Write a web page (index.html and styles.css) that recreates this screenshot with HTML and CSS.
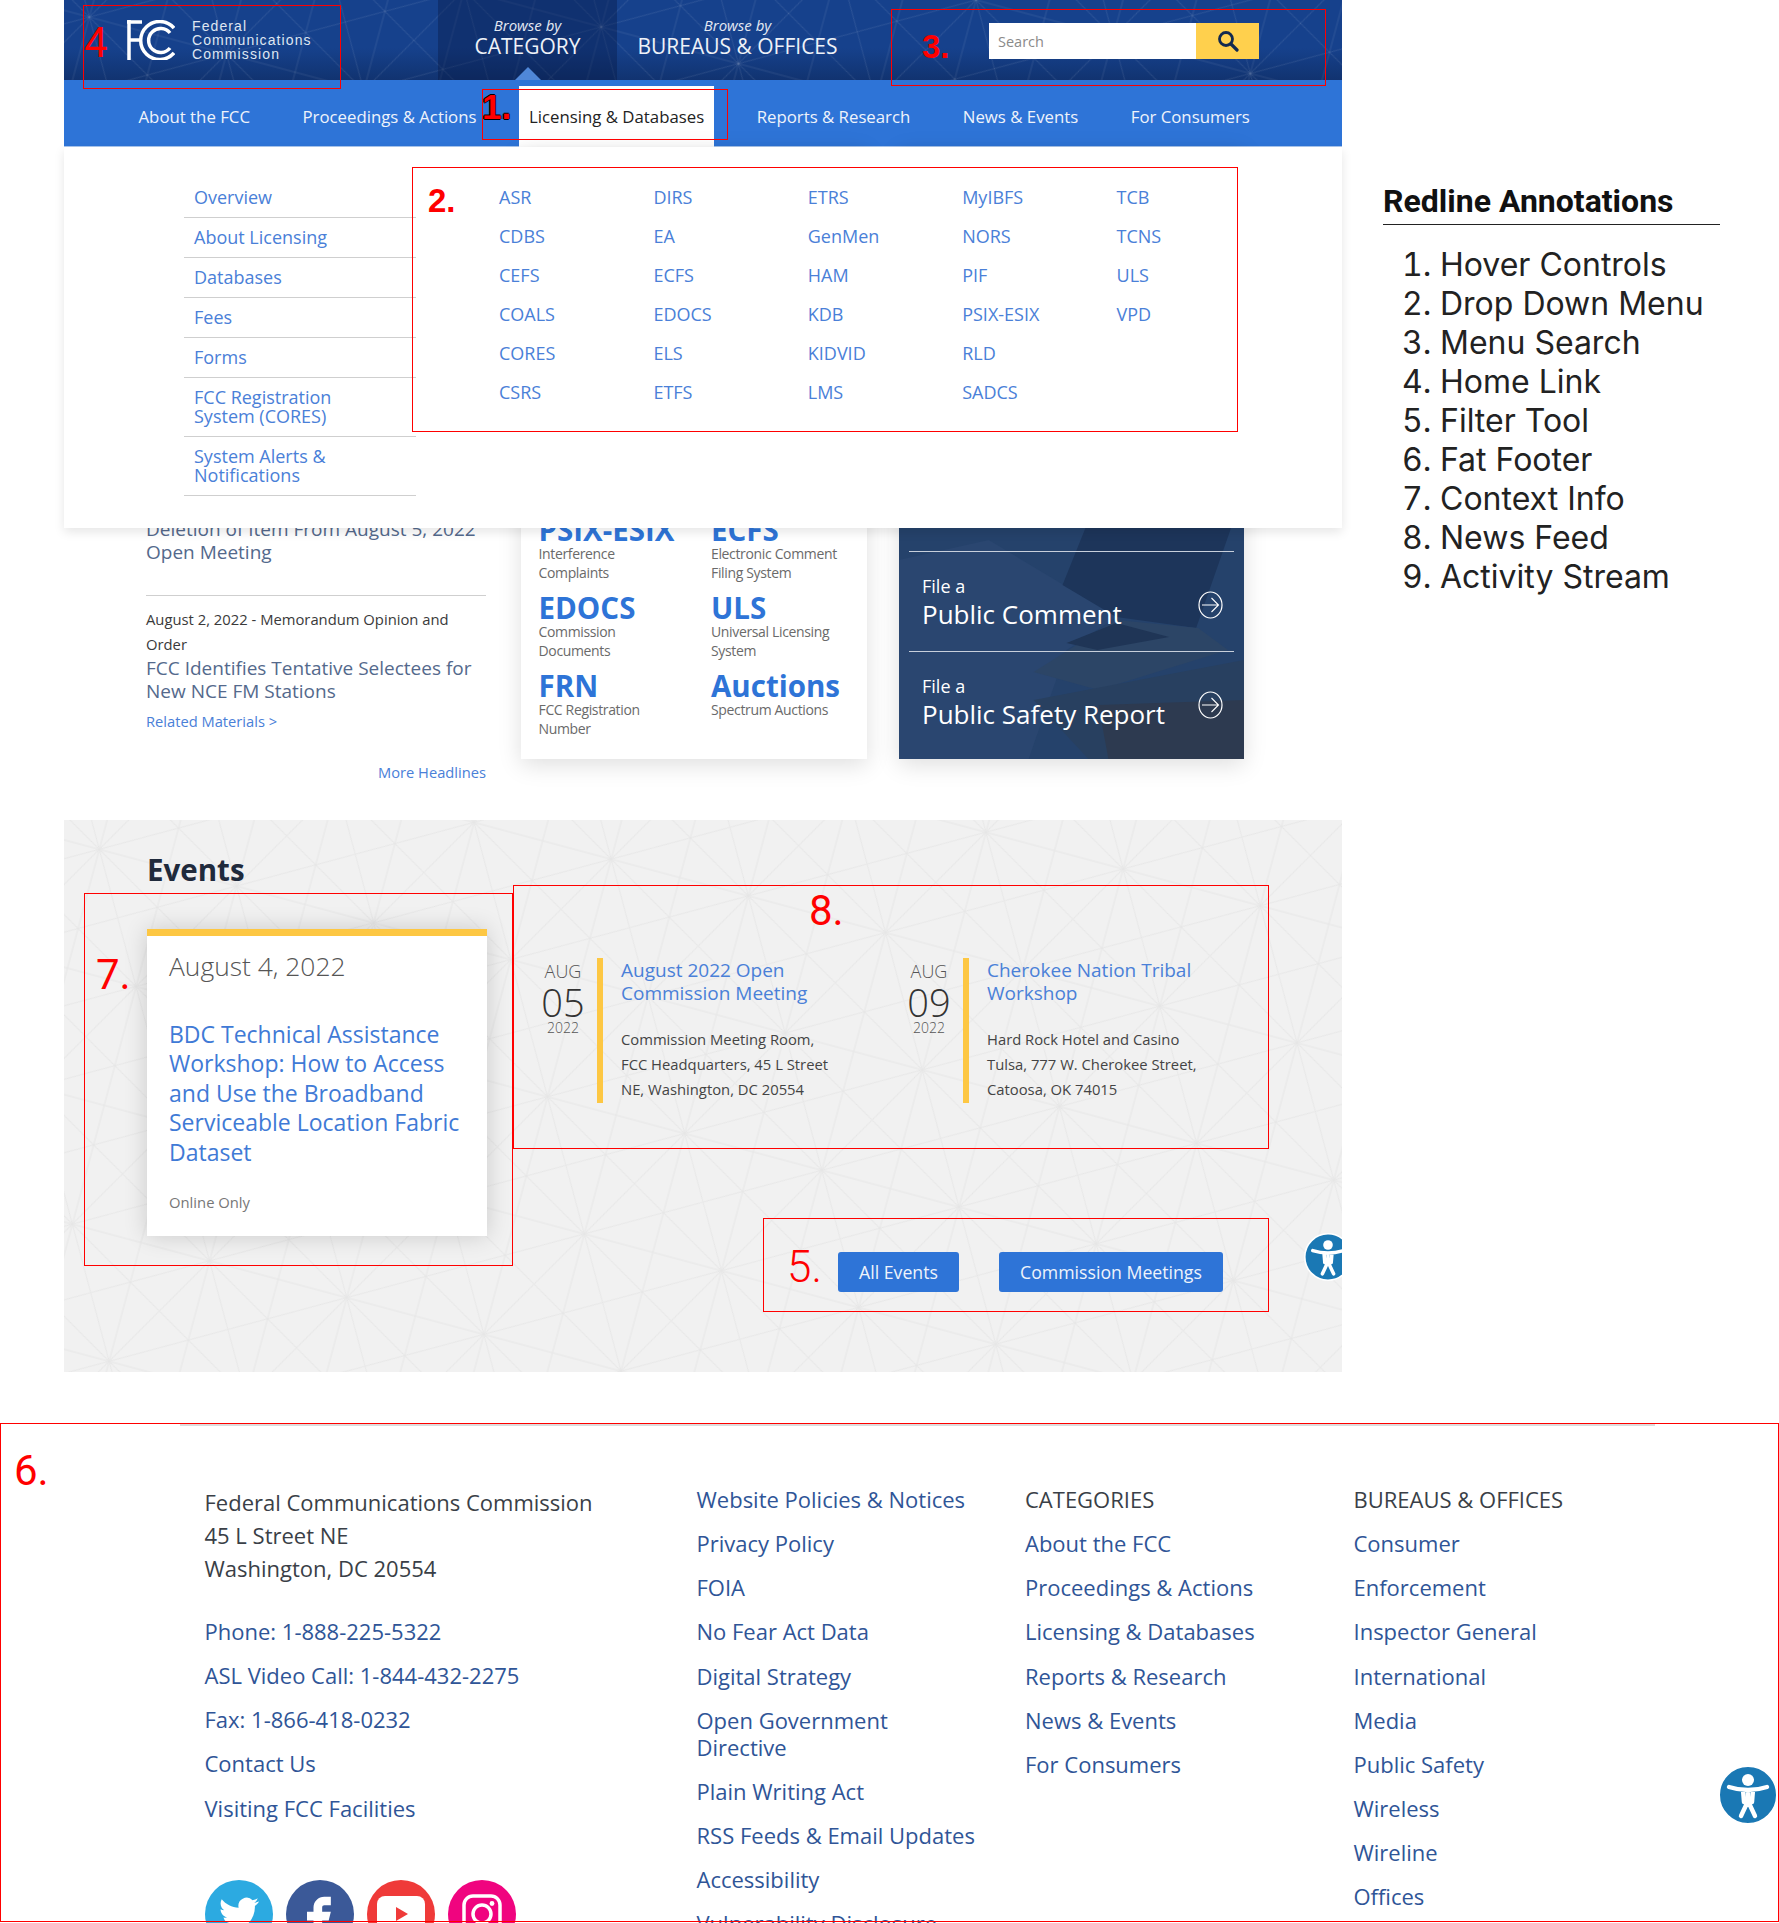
FILE: index.html
```html
<!DOCTYPE html>
<html lang="en">

<head>
  <meta charset="UTF-8">
  <title>FCC Redline Annotations</title>
  <link rel="stylesheet" href="styles.css">
</head>

<body>
  <svg class="sprites" width="0" height="0">
    <symbol id="access" viewBox="0 0 60 60">
      <circle cx="30" cy="30" r="29" fill="#1a78b4" stroke="#fff" stroke-width="2"/>
      <circle cx="30" cy="15" r="6" fill="#fff"/>
      <path d="M11 22c6 2 12 3 19 3s13-1 19-3M30 25v12M30 36l-7 15M30 36l7 15M25 25l1 12M35 25l-1 12" fill="none" stroke="#fff" stroke-width="4.4" stroke-linecap="round"/>
    </symbol>
    <symbol id="circle-arrow" viewBox="0 0 25 28">
      <ellipse cx="12.5" cy="14" rx="11.5" ry="13" fill="none" stroke="#fff" stroke-width="1.2"/>
      <path d="M4 14h16M13.5 7l7 7-7 7" fill="none" stroke="#fff" stroke-width="1.1"/>
    </symbol>
  </svg>

  <div class="page">
    <div class="top">
      <div class="site">
        <header class="masthead">
          <a class="logo">
            <svg class="logo-mark" viewBox="0 0 48 40" width="48" height="40">
              <path d="M2 0v40M0 2h15M2 20h11" fill="none" stroke="#fff" stroke-width="3.5"/>
              <path d="M47 8A19 19 0 1 0 47 33M43 13A12 12 0 1 0 43 28" fill="none" stroke="#fff" stroke-width="3.5"/>
            </svg>
            <span class="logo-text">Federal<br>Communications<br>Commission</span>
          </a>
          <a class="tab tab-category is-open"><em>Browse by</em><span>CATEGORY</span></a>
          <a class="tab tab-bureaus"><em>Browse by</em><span>BUREAUS &amp; OFFICES</span></a>
          <form class="search">
            <span class="search-input">Search</span>
            <span class="search-btn">
              <svg viewBox="0 0 22 22" width="22" height="22">
                <circle cx="9" cy="9" r="6.5" fill="none" stroke="#12294f" stroke-width="2.8"/>
                <path d="M14 14l6 6" stroke="#12294f" stroke-width="3.2" stroke-linecap="round"/>
              </svg>
            </span>
          </form>
        </header>

        <nav class="mainnav">
          <a>About the FCC</a>
          <a>Proceedings &amp; Actions</a>
          <a class="active">Licensing &amp; Databases</a>
          <a>Reports &amp; Research</a>
          <a>News &amp; Events</a>
          <a>For Consumers</a>
        </nav>

        <section class="content">
          <div class="headlines">
            <div class="headline first">
              <a class="headline-title">Deletion of Item From August 5, 2022<br>Open Meeting</a>
            </div>
            <div class="headline">
              <p class="headline-date">August 2, 2022 - Memorandum Opinion and<br>Order</p>
              <a class="headline-title">FCC Identifies Tentative Selectees for New NCE FM Stations</a>
              <a class="related">Related Materials &gt;</a>
            </div>
            <a class="more">More Headlines</a>
          </div>

          <div class="systems">
            <div class="system"><h3>PSIX-ESIX</h3><p>Interference<br>Complaints</p></div>
            <div class="system"><h3>ECFS</h3><p>Electronic Comment<br>Filing System</p></div>
            <div class="system"><h3>EDOCS</h3><p>Commission<br>Documents</p></div>
            <div class="system"><h3>ULS</h3><p>Universal Licensing<br>System</p></div>
            <div class="system"><h3>FRN</h3><p>FCC Registration<br>Number</p></div>
            <div class="system"><h3>Auctions</h3><p>Spectrum Auctions</p></div>
          </div>

          <div class="file-card">
            <svg class="file-photo" viewBox="0 0 346 259" preserveAspectRatio="none">
              <path d="M0 60L90 40 165 85 218 117 168 150 130 259H0z" fill="#2a4670"/>
              <path d="M187 28H333L298 128 218 117 164 85z" fill="#1d355a"/>
              <path d="M135 172L218 120 300 128 330 150 200 190z" fill="#2c4566"/>
              <path d="M168 143L218 123 271 137 199 150z" fill="#1f3556"/>
              <path d="M135 200L346 160V259H190z" fill="#284060"/>
              <path d="M200 205L346 200V259H210z" fill="#2d3a50"/>
            </svg>
            <a class="file-row">
              <span class="file-text"><small>File a</small>Public Comment</span>
              <svg class="file-arrow"><use href="#circle-arrow"/></svg>
            </a>
            <a class="file-row">
              <span class="file-text"><small>File a</small>Public Safety Report</span>
              <svg class="file-arrow"><use href="#circle-arrow"/></svg>
            </a>
          </div>

          <div class="dropdown">
            <ul class="side-links">
              <li><a>Overview</a></li>
              <li><a>About Licensing</a></li>
              <li><a>Databases</a></li>
              <li><a>Fees</a></li>
              <li><a>Forms</a></li>
              <li class="tall"><a>FCC Registration<br>System (CORES)</a></li>
              <li class="tall"><a>System Alerts &amp;<br>Notifications</a></li>
            </ul>
            <ul class="db-links">
              <li>ASR</li><li>CDBS</li><li>CEFS</li><li>COALS</li><li>CORES</li><li>CSRS</li>
              <li>DIRS</li><li>EA</li><li>ECFS</li><li>EDOCS</li><li>ELS</li><li>ETFS</li>
              <li>ETRS</li><li>GenMen</li><li>HAM</li><li>KDB</li><li>KIDVID</li><li>LMS</li>
              <li>MyIBFS</li><li>NORS</li><li>PIF</li><li>PSIX-ESIX</li><li>RLD</li><li>SADCS</li>
              <li>TCB</li><li>TCNS</li><li>ULS</li><li>VPD</li>
            </ul>
          </div>
        </section>

        <section class="events">
          <h2>Events</h2>
          <div class="events-body">
            <article class="feature">
              <p class="feature-date">August 4, 2022</p>
              <a class="feature-title">BDC Technical Assistance Workshop: How to Access and Use the Broadband Serviceable Location Fabric Dataset</a>
              <p class="feature-place">Online Only</p>
            </article>
            <div class="events-side">
              <div class="event-list">
                <div class="event">
                  <div class="event-date"><span class="mon">AUG</span><span class="day">05</span><span class="year">2022</span></div>
                  <div class="event-info">
                    <a>August 2022 Open<br>Commission Meeting</a>
                    <p>Commission Meeting Room,<br>FCC Headquarters, 45 L Street<br>NE, Washington, DC 20554</p>
                  </div>
                </div>
                <div class="event">
                  <div class="event-date"><span class="mon">AUG</span><span class="day">09</span><span class="year">2022</span></div>
                  <div class="event-info">
                    <a>Cherokee Nation Tribal<br>Workshop</a>
                    <p>Hard Rock Hotel and Casino<br>Tulsa, 777 W. Cherokee Street,<br>Catoosa, OK 74015</p>
                  </div>
                </div>
              </div>
              <div class="event-filters">
                <a class="btn btn-all">All Events</a>
                <a class="btn btn-meetings">Commission Meetings</a>
              </div>
            </div>
          </div>
          <svg class="access access-events"><use href="#access"/></svg>
        </section>
      </div>

      <aside class="notes">
        <h1>Redline Annotations</h1>
        <ol>
          <li>Hover Controls</li>
          <li>Drop Down Menu</li>
          <li>Menu Search</li>
          <li>Home Link</li>
          <li>Filter Tool</li>
          <li>Fat Footer</li>
          <li>Context Info</li>
          <li>News Feed</li>
          <li>Activity Stream</li>
        </ol>
      </aside>
    </div>

    <footer class="fatfooter">
      <div class="footer-grid">
        <div class="footer-contact">
          <p class="address">Federal Communications Commission<br>45 L Street NE<br>Washington, DC 20554</p>
          <ul class="footer-links">
            <li>Phone: 1-888-225-5322</li>
            <li>ASL Video Call: 1-844-432-2275</li>
            <li>Fax: 1-866-418-0232</li>
            <li>Contact Us</li>
            <li>Visiting FCC Facilities</li>
          </ul>
          <div class="social">
            <span class="social-icon twitter">
              <svg viewBox="0 0 24 24" width="40" height="40"><path fill="#fff" d="M23.95 4.57a10 10 0 0 1-2.82.77 4.96 4.96 0 0 0 2.16-2.72c-.95.55-2 .96-3.12 1.19a4.92 4.92 0 0 0-8.38 4.48C7.69 8.09 4.07 6.13 1.64 3.16a4.82 4.82 0 0 0-.67 2.48c0 1.71.87 3.21 2.19 4.1a4.9 4.9 0 0 1-2.23-.61v.06c0 2.38 1.69 4.37 3.95 4.83a5 5 0 0 1-2.21.08 4.94 4.94 0 0 0 4.6 3.42A9.87 9.87 0 0 1 0 19.54a13.94 13.94 0 0 0 7.55 2.21c9.06 0 14-7.5 14-13.98 0-.21 0-.42-.02-.63A9.94 9.94 0 0 0 24 4.59z"/></svg>
            </span>
            <span class="social-icon facebook">
              <svg viewBox="0 0 24 24" width="52" height="52"><path fill="#fff" d="M14 8h3V4h-3c-2.8 0-5 2.2-5 5v2H6v4h3v9h4v-9h3l1-4h-4V9c0-.6.4-1 1-1z"/></svg>
            </span>
            <span class="social-icon youtube">
              <svg viewBox="0 0 48 36" width="48" height="36"><rect width="48" height="36" rx="8" fill="#fff"/><path d="M19 11l12 7-12 7z" fill="#ef3a39"/></svg>
            </span>
            <span class="social-icon instagram">
              <svg viewBox="0 0 40 40" width="40" height="40"><rect x="2" y="2" width="36" height="36" rx="9" fill="none" stroke="#fff" stroke-width="3.5"/><circle cx="20" cy="20" r="9" fill="none" stroke="#fff" stroke-width="3.5"/><circle cx="30" cy="9.5" r="2.4" fill="#fff"/></svg>
            </span>
          </div>
        </div>

        <ul class="footer-links">
          <li>Website Policies &amp; Notices</li>
          <li>Privacy Policy</li>
          <li>FOIA</li>
          <li>No Fear Act Data</li>
          <li>Digital Strategy</li>
          <li>Open Government<br>Directive</li>
          <li>Plain Writing Act</li>
          <li>RSS Feeds &amp; Email Updates</li>
          <li>Accessibility</li>
          <li>Vulnerability Disclosure</li>
        </ul>

        <ul class="footer-links">
          <li class="footer-head">CATEGORIES</li>
          <li>About the FCC</li>
          <li>Proceedings &amp; Actions</li>
          <li>Licensing &amp; Databases</li>
          <li>Reports &amp; Research</li>
          <li>News &amp; Events</li>
          <li>For Consumers</li>
        </ul>

        <ul class="footer-links">
          <li class="footer-head">BUREAUS &amp; OFFICES</li>
          <li>Consumer</li>
          <li>Enforcement</li>
          <li>Inspector General</li>
          <li>International</li>
          <li>Media</li>
          <li>Public Safety</li>
          <li>Wireless</li>
          <li>Wireline</li>
          <li>Offices</li>
        </ul>
      </div>
      <svg class="access access-footer"><use href="#access"/></svg>
    </footer>

    <div class="redbox box-home"></div>
    <div class="redbox box-hover"></div>
    <div class="redbox box-search"></div>
    <div class="redbox box-menu"></div>
    <div class="redbox box-context"></div>
    <div class="redbox box-news"></div>
    <div class="redbox box-filter"></div>
    <div class="redbox box-footer"></div>

    <span class="mark mark-1">1.</span>
    <span class="mark mark-2">2.</span>
    <span class="mark mark-3">3.</span>
    <span class="mark mark-4">4</span>
    <span class="mark mark-5">5.</span>
    <span class="mark mark-6">6.</span>
    <span class="mark mark-7">7.</span>
    <span class="mark mark-8">8.</span>
  </div>
</body>

</html>
```

FILE: styles.css
```css
* {
  box-sizing: border-box;
}

body {
  margin: 0;
  font-family: "Open Sans", sans-serif;
  background: #fff;
}

ul,
ol,
p,
h1,
h2,
h3 {
  margin: 0;
  padding: 0;
}

ul {
  list-style: none;
}

.sprites {
  position: absolute;
}

.page {
  position: relative;
  height: 1923px;
  overflow: hidden;
}

.top {
  display: flex;
  padding-left: 64px;
}

.site {
  width: 1278px;
  flex: none;
}

/* header */
.masthead {
  display: flex;
  height: 80px;
  padding-left: 63px;
  color: #fff;
  background:
    url("data:image/svg+xml,%3Csvg xmlns='http://www.w3.org/2000/svg' width='1278' height='80'%3E%3Cdefs%3E%3Cpattern id='n' width='142' height='246' patternUnits='userSpaceOnUse' patternTransform='translate(912 0) rotate(15)'%3E%3Cpath d='M0 0H142M0 123H142M0 246H142M0 0L142 246M142 0L0 246M0 0V246M71 0V246M142 0V246M0 0L142 82M0 82L142 164M0 164L142 246M142 0L0 82M142 82L0 164M142 164L0 246' fill='none' stroke='white' stroke-opacity='.1'/%3E%3C/pattern%3E%3C/defs%3E%3Crect width='100%25' height='100%25' fill='url(%23n)'/%3E%3C/svg%3E"),
    linear-gradient(#16418c 60%, #113370);
}

.logo {
  flex: 0 0 311px;
  display: flex;
  align-items: center;
  gap: 17px;
}

.logo-text {
  font-family: "Liberation Sans", sans-serif;
  font-size: 14px;
  line-height: 14px;
  letter-spacing: 1.1px;
  color: #dfe6f2;
}

.tab {
  position: relative;
  display: flex;
  flex-direction: column;
  align-items: center;
  padding-top: 15px;
}

.tab em {
  font-size: 15px;
  line-height: 20px;
  color: #e4e9f3;
}

.tab span {
  margin-top: -2px;
  font-size: 21px;
  line-height: 26px;
  color: #eef2f8;
}

.tab-category {
  width: 179px;
}

.tab-bureaus {
  width: 241px;
}

.is-open {
  background: rgba(5, 20, 60, 0.35);
}

.is-open::after {
  content: "";
  position: absolute;
  bottom: 0;
  left: 77px;
  border-left: 13px solid transparent;
  border-right: 13px solid transparent;
  border-bottom: 13px solid #4f87d8;
}

.search {
  display: flex;
  height: 36px;
  margin: 23px 0 0 131px;
}

.search-input {
  width: 207px;
  padding-left: 9px;
  font-size: 14.5px;
  line-height: 37px;
  color: #8a8a8a;
  background: #fff;
}

.search-btn {
  display: flex;
  align-items: center;
  justify-content: center;
  width: 63px;
  background: #ffd04d;
}

/* nav */
.mainnav {
  display: flex;
  gap: 52.5px;
  height: 67px;
  padding: 6px 0 0 74.5px;
  background: #2e74d7;
  border-bottom: 1px solid #a9c6ee;
}

.mainnav a {
  font-size: 16.8px;
  line-height: 61px;
  height: 61px;
  color: #eef3fb;
  white-space: nowrap;
}

.mainnav .active {
  margin: 0 -10px;
  padding: 0 10px;
  color: #222;
  background: #fff;
}

/* content under the open menu */
.content {
  position: relative;
  display: flex;
  height: 673px;
  padding-left: 82px;
}

.headlines {
  width: 340px;
  flex: none;
  padding-top: 371px;
}

.headline-title {
  display: block;
  font-size: 19px;
  line-height: 23px;
  color: #54698c;
}

.headline.first {
  padding-bottom: 31px;
  border-bottom: 1px solid #cfcfcf;
}

.headline-date {
  padding-top: 11px;
  font-size: 14.8px;
  line-height: 25px;
  color: #3a3a3a;
}

.related {
  display: block;
  margin-top: 8px;
  font-size: 14.7px;
  line-height: 20px;
  color: #4a80d8;
}

.more {
  display: block;
  margin-top: 31px;
  font-size: 14.7px;
  line-height: 20px;
  text-align: right;
  color: #4a80d8;
}

.systems {
  display: grid;
  grid-template-columns: 172.5px 1fr;
  align-content: end;
  row-gap: 12px;
  flex: none;
  width: 346px;
  height: 612px;
  margin-left: 35px;
  padding: 0 0 21px 17.5px;
  background: #fff;
  box-shadow: 0 6px 22px rgba(0, 0, 0, 0.13);
}

.system h3 {
  margin-bottom: 1px;
  font-size: 29.5px;
  font-weight: 700;
  line-height: 28px;
  color: #2e74d7;
}

.system p {
  font-size: 14px;
  line-height: 18.5px;
  letter-spacing: -0.35px;
  color: #6a6a6a;
}

.file-card {
  position: relative;
  display: flex;
  flex-direction: column;
  justify-content: flex-end;
  flex: none;
  width: 345px;
  height: 612px;
  margin-left: 32px;
  padding: 0 10px 8px;
  color: #fff;
  background: #25426b;
  box-shadow: 0 6px 22px rgba(0, 0, 0, 0.13);
}

.file-photo {
  position: absolute;
  left: 0;
  bottom: 0;
  width: 100%;
  height: 259px;
}

.file-row {
  position: relative;
  display: flex;
  align-items: center;
  justify-content: space-between;
  height: 100px;
  padding: 6px 11px 0 13px;
  border-top: 1px solid #c7cfdb;
}

.file-text {
  margin-top: -6px;
  font-size: 26px;
  line-height: 32px;
}

.file-text small {
  display: block;
  font-size: 18px;
  line-height: 24px;
}

.file-arrow {
  width: 25px;
  height: 28px;
}

.dropdown {
  position: absolute;
  top: 0;
  left: 0;
  right: 0;
  height: 381px;
  display: flex;
  padding: 31px 0 0 120px;
  background: #fff;
  box-shadow: 0 4px 10px rgba(0, 0, 0, 0.1);
}

.side-links {
  width: 232px;
  flex: none;
}

.side-links li {
  height: 40px;
  padding: 9px 0 0 10px;
  border-bottom: 1px solid #cfcfcf;
  font-size: 18px;
  line-height: 20px;
  color: #4a80d8;
}

.side-links .tall {
  height: 59px;
  line-height: 18.5px;
  padding-top: 10px;
}

.db-links {
  display: grid;
  grid-template-rows: repeat(6, 39px);
  grid-auto-flow: column;
  grid-auto-columns: 154.4px;
  margin-left: 83px;
  font-size: 18px;
  line-height: 39px;
  height: 234px;
  color: #4a80d8;
}

/* events */
.events {
  position: relative;
  height: 552px;
  padding: 30px 0 0 83px;
  overflow: hidden;
  background:
    url("data:image/svg+xml,%3Csvg xmlns='http://www.w3.org/2000/svg' width='1278' height='552'%3E%3Cdefs%3E%3Cpattern id='n' width='142' height='246' patternUnits='userSpaceOnUse' patternTransform='translate(895 387) rotate(15)'%3E%3Cpath d='M0 0H142M0 123H142M0 246H142M0 0L142 246M142 0L0 246M0 0V246M71 0V246M142 0V246M0 0L142 82M0 82L142 164M0 164L142 246M142 0L0 82M142 82L0 164M142 164L0 246' fill='none' stroke='%23e6e6e6'/%3E%3C/pattern%3E%3C/defs%3E%3Crect width='100%25' height='100%25' fill='url(%23n)'/%3E%3C/svg%3E"),
    #f1f1f1;
}

.events h2 {
  font-size: 29.5px;
  line-height: 40px;
  font-weight: 700;
  color: #1f2a3c;
}

.events-body {
  display: flex;
  margin-top: 39px;
}

.feature {
  width: 340px;
  height: 307px;
  flex: none;
  padding: 0 22px;
  border-top: 7px solid #fdc743;
  background: #fff;
  box-shadow: 0 0 22px rgba(0, 0, 0, 0.16);
}

.feature-date {
  padding-top: 11.5px;
  font-size: 26.4px;
  font-weight: 300;
  line-height: 36px;
  color: #555;
}

.feature-title {
  display: block;
  margin-top: 36px;
  font-size: 23px;
  line-height: 29.5px;
  color: #3f7ad6;
}

.feature-place {
  margin-top: 25px;
  font-size: 14.8px;
  line-height: 20px;
  color: #777;
}

.events-side {
  margin: 29px 0 0 46px;
}

.event-list {
  display: flex;
  height: 145px;
}

.event {
  display: flex;
  width: 366px;
}

.event-date {
  display: flex;
  flex-direction: column;
  align-items: center;
  width: 60px;
  margin-right: 4px;
  color: #555;
}

.mon {
  font-size: 18px;
  font-weight: 300;
  line-height: 26px;
}

.day {
  font-size: 38px;
  font-weight: 300;
  line-height: 36px;
  color: #333;
}

.year {
  font-size: 14px;
  font-weight: 300;
  line-height: 16px;
}

.event-info {
  padding-left: 18px;
  border-left: 6px solid #fdc743;
}

.event-info a {
  display: block;
  padding-top: 1px;
  font-size: 19px;
  line-height: 23px;
  color: #4a80d8;
}

.event-info p {
  margin-top: 22px;
  font-size: 14.8px;
  line-height: 25px;
  color: #444;
}

.event-filters {
  display: flex;
  gap: 40px;
  margin: 149px 0 0 305px;
}

.btn {
  height: 40px;
  border-radius: 3px;
  font-size: 17.7px;
  line-height: 40px;
  text-align: center;
  color: #eef3fb;
  background: #2e74d7;
}

.btn-all {
  width: 121px;
}

.btn-meetings {
  width: 224px;
}

.access {
  position: absolute;
}

.access-events {
  left: 1240px;
  top: 413px;
  width: 48px;
  height: 48px;
}

.access-footer {
  left: 1718px;
  top: 342px;
  width: 60px;
  height: 60px;
}

/* annotations list */
.notes {
  width: 337px;
  margin-left: 41px;
  padding-top: 178px;
  font-family: Inter, sans-serif;
}

.notes h1 {
  height: 47px;
  font-family: Roboto, sans-serif;
  font-size: 32px;
  font-weight: 700;
  line-height: 46px;
  color: #111;
  border-bottom: 1.5px solid #222;
}

.notes ol {
  padding: 20px 0 0 57px;
  font-size: 32px;
  line-height: 39px;
  color: #222;
}

/* footer */
.fatfooter {
  position: relative;
  height: 500px;
  margin-top: 51px;
  overflow: hidden;
}

.fatfooter::before {
  content: "";
  display: block;
  height: 3px;
  margin: 0 124px 0 180px;
  background: #dcdcdc;
}

.footer-grid {
  display: grid;
  grid-template-columns: 492px 328.5px 328.5px 1fr;
  padding: 60px 0 0 204.5px;
  font-size: 22px;
}

.address {
  line-height: 33px;
  color: #3a3f47;
}

.footer-contact .footer-links {
  margin-top: 33px;
}

.footer-links {
  display: flex;
  flex-direction: column;
  gap: 17.15px;
  line-height: 27px;
  color: #2f5597;
}

.footer-links .footer-head {
  color: #3a3f47;
}

.social {
  display: flex;
  gap: 13px;
  margin-top: 58px;
}

.social-icon {
  display: flex;
  align-items: center;
  justify-content: center;
  width: 68px;
  height: 68px;
  border-radius: 50%;
}

.twitter {
  background: #2caae1;
}

.facebook {
  background: #3b5998;
}

.youtube {
  background: #ef3a39;
}

.instagram {
  background: #f0047f;
}

/* redlines laid over the screenshot */
.redbox {
  position: absolute;
  border: 1px solid #f00;
}

.box-home {
  left: 83px;
  top: 5px;
  width: 258px;
  height: 84px;
}

.box-hover {
  left: 482px;
  top: 89px;
  width: 246px;
  height: 51px;
}

.box-search {
  left: 891px;
  top: 9px;
  width: 435px;
  height: 77px;
}

.box-menu {
  left: 412px;
  top: 167px;
  width: 826px;
  height: 265px;
}

.box-context {
  left: 84px;
  top: 893px;
  width: 429px;
  height: 373px;
}

.box-news {
  left: 513px;
  top: 885px;
  width: 756px;
  height: 264px;
}

.box-filter {
  left: 763px;
  top: 1218px;
  width: 506px;
  height: 94px;
}

.box-footer {
  left: 0;
  top: 1423px;
  width: 1779px;
  height: 499px;
}

.mark {
  position: absolute;
  font-family: Roboto, sans-serif;
  font-size: 42px;
  font-weight: 300;
  line-height: 42px;
  color: #f00;
}

.mark-1,
.mark-2,
.mark-3 {
  font-family: "Liberation Sans", sans-serif;
  font-weight: 700;
  font-size: 33px;
}

.mark-1 {
  left: 482px;
  top: 86px;
  font-size: 35px;
  text-shadow: -1px 0 #000, 1px 0 #000, 0 1px #000, 0 -1px #000;
}

.mark-2 {
  left: 428px;
  top: 180px;
}

.mark-3 {
  left: 922px;
  top: 26px;
}

.mark-4 {
  left: 84px;
  top: 22px;
  font-weight: 400;
}

.mark-5 {
  left: 787px;
  top: 1246px;
  font-size: 44px;
}

.mark-6 {
  left: 14px;
  top: 1450px;
  font-weight: 400;
}

.mark-7 {
  left: 96px;
  top: 954px;
  font-weight: 400;
}

.mark-8 {
  left: 809px;
  top: 890px;
  font-weight: 400;
}
```
